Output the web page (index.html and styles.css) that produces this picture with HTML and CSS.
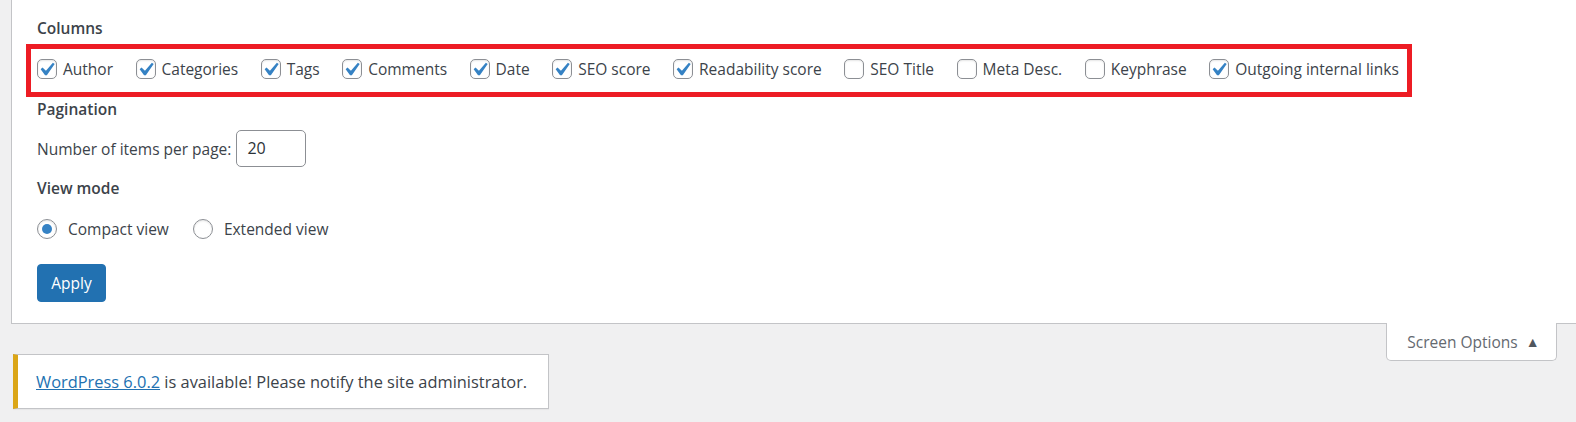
FILE: index.html
```html
<!DOCTYPE html>
<html lang="en">
<head>
<meta charset="utf-8">
<title>Screen Options</title>
<link rel="stylesheet" href="styles.css">
</head>
<body>
<div class="wrap">
  <form class="screen-meta">
    <fieldset class="group">
      <legend class="legend">Columns</legend>
      <div class="columns">
        <label class="opt"><span class="cb on"><svg viewBox="3.81 2.86 13.33 13.33"><path d="M14.83 4.89l1.34.94-5.81 8.38H9.02L5.78 9.67l1.34-1.25 2.57 2.4z"/></svg></span>Author</label>
        <label class="opt"><span class="cb on"><svg viewBox="3.81 2.86 13.33 13.33"><path d="M14.83 4.89l1.34.94-5.81 8.38H9.02L5.78 9.67l1.34-1.25 2.57 2.4z"/></svg></span>Categories</label>
        <label class="opt"><span class="cb on"><svg viewBox="3.81 2.86 13.33 13.33"><path d="M14.83 4.89l1.34.94-5.81 8.38H9.02L5.78 9.67l1.34-1.25 2.57 2.4z"/></svg></span>Tags</label>
        <label class="opt"><span class="cb on"><svg viewBox="3.81 2.86 13.33 13.33"><path d="M14.83 4.89l1.34.94-5.81 8.38H9.02L5.78 9.67l1.34-1.25 2.57 2.4z"/></svg></span>Comments</label>
        <label class="opt"><span class="cb on"><svg viewBox="3.81 2.86 13.33 13.33"><path d="M14.83 4.89l1.34.94-5.81 8.38H9.02L5.78 9.67l1.34-1.25 2.57 2.4z"/></svg></span>Date</label>
        <label class="opt"><span class="cb on"><svg viewBox="3.81 2.86 13.33 13.33"><path d="M14.83 4.89l1.34.94-5.81 8.38H9.02L5.78 9.67l1.34-1.25 2.57 2.4z"/></svg></span>SEO score</label>
        <label class="opt"><span class="cb on"><svg viewBox="3.81 2.86 13.33 13.33"><path d="M14.83 4.89l1.34.94-5.81 8.38H9.02L5.78 9.67l1.34-1.25 2.57 2.4z"/></svg></span>Readability score</label>
        <label class="opt"><span class="cb"></span>SEO Title</label>
        <label class="opt"><span class="cb"></span>Meta Desc.</label>
        <label class="opt"><span class="cb"></span>Keyphrase</label>
        <label class="opt"><span class="cb on"><svg viewBox="3.81 2.86 13.33 13.33"><path d="M14.83 4.89l1.34.94-5.81 8.38H9.02L5.78 9.67l1.34-1.25 2.57 2.4z"/></svg></span>Outgoing internal links</label>
      </div>
    </fieldset>

    <fieldset class="group">
      <legend class="legend">Pagination</legend>
      <div class="per-page">
        <label class="per-page-label">Number of items per page:</label>
        <span class="num-input">20</span>
      </div>
    </fieldset>

    <fieldset class="group group-view">
      <legend class="legend">View mode</legend>
      <div class="view-modes">
        <label class="opt radio-opt"><span class="radio on"></span>Compact view</label>
        <label class="opt radio-opt"><span class="radio"></span>Extended view</label>
      </div>
    </fieldset>

    <div class="submit">
      <span class="button-primary">Apply</span>
    </div>
  </form>

  <div class="below">
    <div class="notice">
      <p><a href="#" class="link">WordPress 6.0.2</a> is available! Please notify the site administrator.</p>
    </div>
    <div class="meta-links">
      <span class="show-settings">Screen Options <span class="arrow">&#9650;</span></span>
    </div>
  </div>
</div>
</body>
</html>
```

FILE: styles.css
```css
html, body {
  margin: 0;
  padding: 0;
  background: #f0f0f1;
}

body {
  font-family: "Open Sans", "Noto Sans", sans-serif;
  font-size: 15.5px;
  line-height: 24px;
  color: #3c434a;
  height: 422px;
  overflow: hidden;
}

.wrap {
  padding-left: 11px;
}

/* settings panel */
.screen-meta {
  background: #fff;
  border-left: 1px solid #c3c4c7;
  border-bottom: 1px solid #c3c4c7;
  padding: 16px 25px 21px 25px;
  margin-right: -20px;
}

.group {
  border: 0;
  margin: 0;
  padding: 0;
  min-width: 0;
}

.legend {
  padding: 0;
  font-weight: 600;
  line-height: 24px;
}

/* column checkboxes row, outlined in red */
.columns {
  display: inline-flex;
  align-items: center;
  gap: 22.5px;
  margin: 4px 0 0 -11px;
  padding: 8px 8px 11px 6px;
  border: 5px solid #ed1c24;
}

.opt {
  display: inline-flex;
  align-items: center;
  gap: 6px;
  white-space: nowrap;
}

.cb {
  box-sizing: border-box;
  width: 20px;
  height: 20px;
  border: 1px solid #8c8f94;
  border-radius: 5px;
  background: #fff;
  box-shadow: inset 0 1px 2px rgba(0, 0, 0, 0.1);
  flex: none;
  display: block;
}

.cb svg {
  display: block;
  width: 100%;
  height: 100%;
  overflow: visible;
  fill: #3582c4;
}

/* pagination */
.per-page {
  display: flex;
  align-items: center;
  gap: 5px;
  margin-top: 9px;
}

.num-input {
  box-sizing: border-box;
  width: 70px;
  height: 37px;
  border: 1px solid #8c8f94;
  border-radius: 5px;
  padding: 0 10px;
  line-height: 35px;
  font-size: 16px;
  color: #2c3338;
  background: #fff;
}

.group-view {
  margin-top: 9px;
}

/* view mode radios */
.view-modes {
  display: flex;
  align-items: center;
  gap: 24px;
  margin-top: 17px;
}

.radio-opt {
  gap: 11px;
}

.radio {
  box-sizing: border-box;
  width: 20px;
  height: 20px;
  border: 1px solid #8c8f94;
  border-radius: 50%;
  background: #fff;
  box-shadow: inset 0 1px 2px rgba(0, 0, 0, 0.1);
  display: flex;
  align-items: center;
  justify-content: center;
  flex: none;
}

.radio.on::before {
  content: "";
  width: 10px;
  height: 10px;
  border-radius: 50%;
  background: #3582c4;
}

.submit {
  margin-top: 23px;
  display: flex;
}

.button-primary {
  box-sizing: border-box;
  display: inline-flex;
  align-items: center;
  justify-content: center;
  width: 69px;
  height: 38px;
  background: #2271b1;
  border: 1px solid #2271b1;
  border-radius: 4px;
  color: #fff;
}

/* row under the panel: update notice and the tab */
.below {
  display: flex;
  justify-content: space-between;
  align-items: flex-start;
  padding: 0 19px 0 2px;
}

.notice {
  box-sizing: border-box;
  width: 536px;
  height: 55px;
  margin-top: 30px;
  background: #fff;
  border: 1px solid #c3c4c7;
  border-left: 5px solid #dba617;
  box-shadow: 0 1px 1px rgba(0, 0, 0, 0.04);
  padding: 0 4px 0 18px;
  display: flex;
  align-items: center;
  font-size: 16.4px;
  white-space: nowrap;
}

.notice p {
  margin: 0;
  padding-top: 1px;
}

.link {
  color: #2271b1;
  text-decoration: underline;
}

.meta-links {
  margin-top: -1px;
}

.show-settings {
  box-sizing: border-box;
  display: flex;
  align-items: center;
  justify-content: center;
  gap: 8px;
  width: 171px;
  height: 38px;
  background: #fff;
  border: 1px solid #c3c4c7;
  border-top: 0;
  border-radius: 0 0 5px 5px;
  color: #646970;
  padding-left: 4px;
}

.arrow {
  font-size: 14px;
  color: #50575e;
  line-height: 1;
}
```
